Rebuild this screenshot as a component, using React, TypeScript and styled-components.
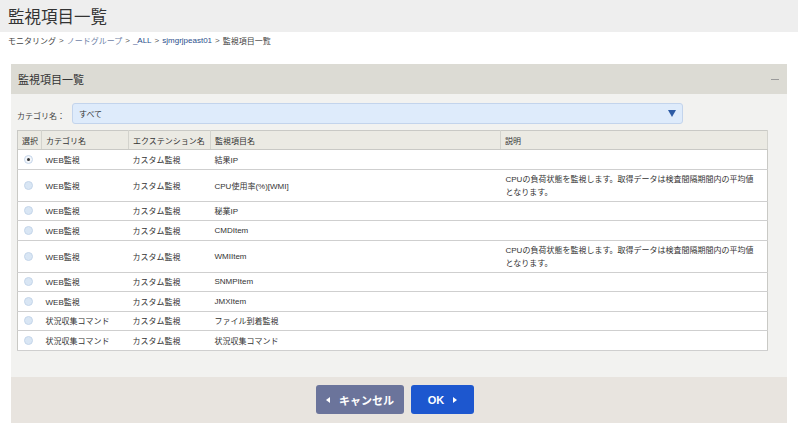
import React from 'react'
import styled, { createGlobalStyle } from 'styled-components'

const GlobalStyle = createGlobalStyle`
  body {
    margin: 0;
    background: #ffffff;
    font-family: 'Liberation Sans', 'Noto Sans CJK JP', sans-serif;
    color: #333;
  }
`

type Row = {
  category: string
  extension: string
  name: string
  desc?: string[]
  selected?: boolean
}

const cpuDesc = ['CPUの負荷状態を監視します。取得データは検査間隔期間内の平均値', 'となります。']

const rows: Row[] = [
  { category: 'WEB監視', extension: 'カスタム監視', name: '結果IP', selected: true },
  { category: 'WEB監視', extension: 'カスタム監視', name: 'CPU使用率(%)[WMI]', desc: cpuDesc },
  { category: 'WEB監視', extension: 'カスタム監視', name: '秘業IP' },
  { category: 'WEB監視', extension: 'カスタム監視', name: 'CMDItem' },
  { category: 'WEB監視', extension: 'カスタム監視', name: 'WMIItem', desc: cpuDesc },
  { category: 'WEB監視', extension: 'カスタム監視', name: 'SNMPItem' },
  { category: 'WEB監視', extension: 'カスタム監視', name: 'JMXItem' },
  { category: '状況収集コマンド', extension: 'カスタム監視', name: 'ファイル到着監視' },
  { category: '状況収集コマンド', extension: 'カスタム監視', name: '状況収集コマンド' },
]

// column widths as measured (border-box); padding is taken off in Th
const columns = [
  { label: '選択', width: 24 },
  { label: 'カテゴリ名', width: 87 },
  { label: 'エクステンション名', width: 82 },
  { label: '監視項目名', width: 290 },
  { label: '説明', width: 267 },
]

const PageHeader = styled.header`
  height: 32px;
  background: #eeeeee;
  padding-left: 8px;
  display: flex;
  align-items: center;
  font-size: 16.5px;
  color: #333;
`

const Breadcrumb = styled.nav`
  height: 17px;
  padding: 0 8px;
  display: flex;
  align-items: center;
  gap: 3px;
  font-size: 8px;
  color: #444;
`

const Crumb = styled.span<{ $link?: boolean; $muted?: boolean }>`
  color: ${(p) => (p.$muted ? '#6f83a8' : p.$link ? '#2b4f8c' : '#444')};
`

const Sep = styled.span`
  color: #555;
  font-size: 8px;
`

const Panel = styled.section`
  margin: 15px 11px 0 11px;
`

const PanelHeader = styled.div`
  height: 30px;
  background: #dcdbd4;
  display: flex;
  align-items: center;
  justify-content: space-between;
  padding: 0 8px 0 7px;
  font-size: 11px;
  color: #333;
`

const Collapse = styled.span`
  width: 8px;
  height: 1px;
  background: #9a9a9a;
`

const PanelBody = styled.div`
  background: #f2f2f0;
  padding: 9px 20px 26px 6px;
`

const FilterRow = styled.div`
  display: flex;
  align-items: center;
  height: 21px;
`

const FilterLabel = styled.label`
  width: 55px;
  font-size: 8px;
  color: #444;
  margin-top: 4px;
`

const Select = styled.div`
  width: 611px;
  height: 21px;
  box-sizing: border-box;
  background: #deebfb;
  border: 1px solid #c3d4ec;
  border-radius: 3px;
  display: flex;
  align-items: center;
  justify-content: space-between;
  padding: 0 6px 0 6px;
  font-size: 8px;
  color: #333;
`

const Table = styled.table`
  margin-top: 6px;
  width: 750px;
  border-collapse: collapse;
  table-layout: fixed;
  background: #ffffff;
  border: 1px solid #c9c9c5;
  font-size: 8px;
`

const Th = styled.th<{ $w: number }>`
  width: ${(p) => p.$w - 5}px;
  height: 18px;
  background: #ebeae3;
  border-right: 1px solid #d3d3cd;
  border-bottom: 1px solid #c9c9c5;
  text-align: left;
  font-weight: normal;
  padding: 0 0 0 4px;
  color: #333;
`

const Tr = styled.tr<{ $tall: boolean }>`
  height: ${(p) => (p.$tall ? 32 : 19.5)}px;
  border-bottom: 1px solid #cfcfcf;
`

const Td = styled.td`
  padding: 0 0 0 4px;
  vertical-align: middle;
  color: #333;
  white-space: nowrap;
`

const DescCell = styled.td`
  padding: 3px 0 0 5px;
  vertical-align: top;
  line-height: 13px;
  color: #333;
  white-space: nowrap;
`

const Radio = styled.span<{ $on?: boolean }>`
  display: inline-block;
  margin-left: 2px;
  width: 9px;
  height: 9px;
  border-radius: 50%;
  box-sizing: border-box;
  border: 1px solid #c5d6ea;
  background: ${(p) => (p.$on ? '#f3f6fa' : '#d9e6f4')};
  position: relative;
  vertical-align: middle;
  &::after {
    content: '';
    display: ${(p) => (p.$on ? 'block' : 'none')};
    position: absolute;
    left: 2px;
    top: 2px;
    width: 3px;
    height: 3px;
    border-radius: 50%;
    background: #333;
  }
`

const Footer = styled.div`
  height: 46px;
  background: #e8e4df;
  display: flex;
  align-items: center;
  justify-content: center;
  gap: 7px;
  padding-right: 8px;
`

const Button = styled.button<{ $primary?: boolean }>`
  height: 29px;
  width: ${(p) => (p.$primary ? 63 : 88)}px;
  border: none;
  border-radius: 3px;
  background: ${(p) => (p.$primary ? '#1d57cf' : '#6b749b')};
  color: #ffffff;
  font-family: 'Liberation Sans', 'Noto Sans CJK JP', sans-serif;
  font-size: 11px;
  font-weight: bold;
  display: flex;
  align-items: center;
  justify-content: center;
  gap: 9px;
  padding: 0;
`

const Tri = ({ dir }: { dir: 'left' | 'right' }) => (
  <svg width="4" height="6" viewBox="0 0 4 6">
    <path d={dir === 'left' ? 'M4 0 L0 3 L4 6 Z' : 'M0 0 L4 3 L0 6 Z'} fill="#ffffff" />
  </svg>
)

export default function App() {
  return (
    <>
      <GlobalStyle />
      <PageHeader>監視項目一覧</PageHeader>
      <Breadcrumb>
        <Crumb>モニタリング</Crumb>
        <Sep>&gt;</Sep>
        <Crumb $muted>ノードグループ</Crumb>
        <Sep>&gt;</Sep>
        <Crumb $link>_ALL</Crumb>
        <Sep>&gt;</Sep>
        <Crumb $link>sjmgrjpeast01</Crumb>
        <Sep>&gt;</Sep>
        <Crumb>監視項目一覧</Crumb>
      </Breadcrumb>
      <Panel>
        <PanelHeader>
          <span>監視項目一覧</span>
          <Collapse />
        </PanelHeader>
        <PanelBody>
          <FilterRow>
            <FilterLabel>カテゴリ名：</FilterLabel>
            <Select>
              <span>すべて</span>
              <svg width="8" height="7" viewBox="0 0 8 7">
                <path d="M0 0 L8 0 L4 7 Z" fill="#2c5aa4" />
              </svg>
            </Select>
          </FilterRow>
          <Table>
            <thead>
              <tr>
                {columns.map((c) => (
                  <Th key={c.label} $w={c.width}>
                    {c.label}
                  </Th>
                ))}
              </tr>
            </thead>
            <tbody>
              {rows.map((r, i) => (
                <Tr key={i} $tall={!!r.desc}>
                  <Td>
                    <Radio $on={r.selected} />
                  </Td>
                  <Td>{r.category}</Td>
                  <Td>{r.extension}</Td>
                  <Td>{r.name}</Td>
                  <DescCell>
                    {r.desc?.map((line, j) => (
                      <div key={j}>{line}</div>
                    ))}
                  </DescCell>
                </Tr>
              ))}
            </tbody>
          </Table>
        </PanelBody>
        <Footer>
          <Button>
            <Tri dir="left" />
            キャンセル
          </Button>
          <Button $primary>
            OK
            <Tri dir="right" />
          </Button>
        </Footer>
      </Panel>
    </>
  )
}
